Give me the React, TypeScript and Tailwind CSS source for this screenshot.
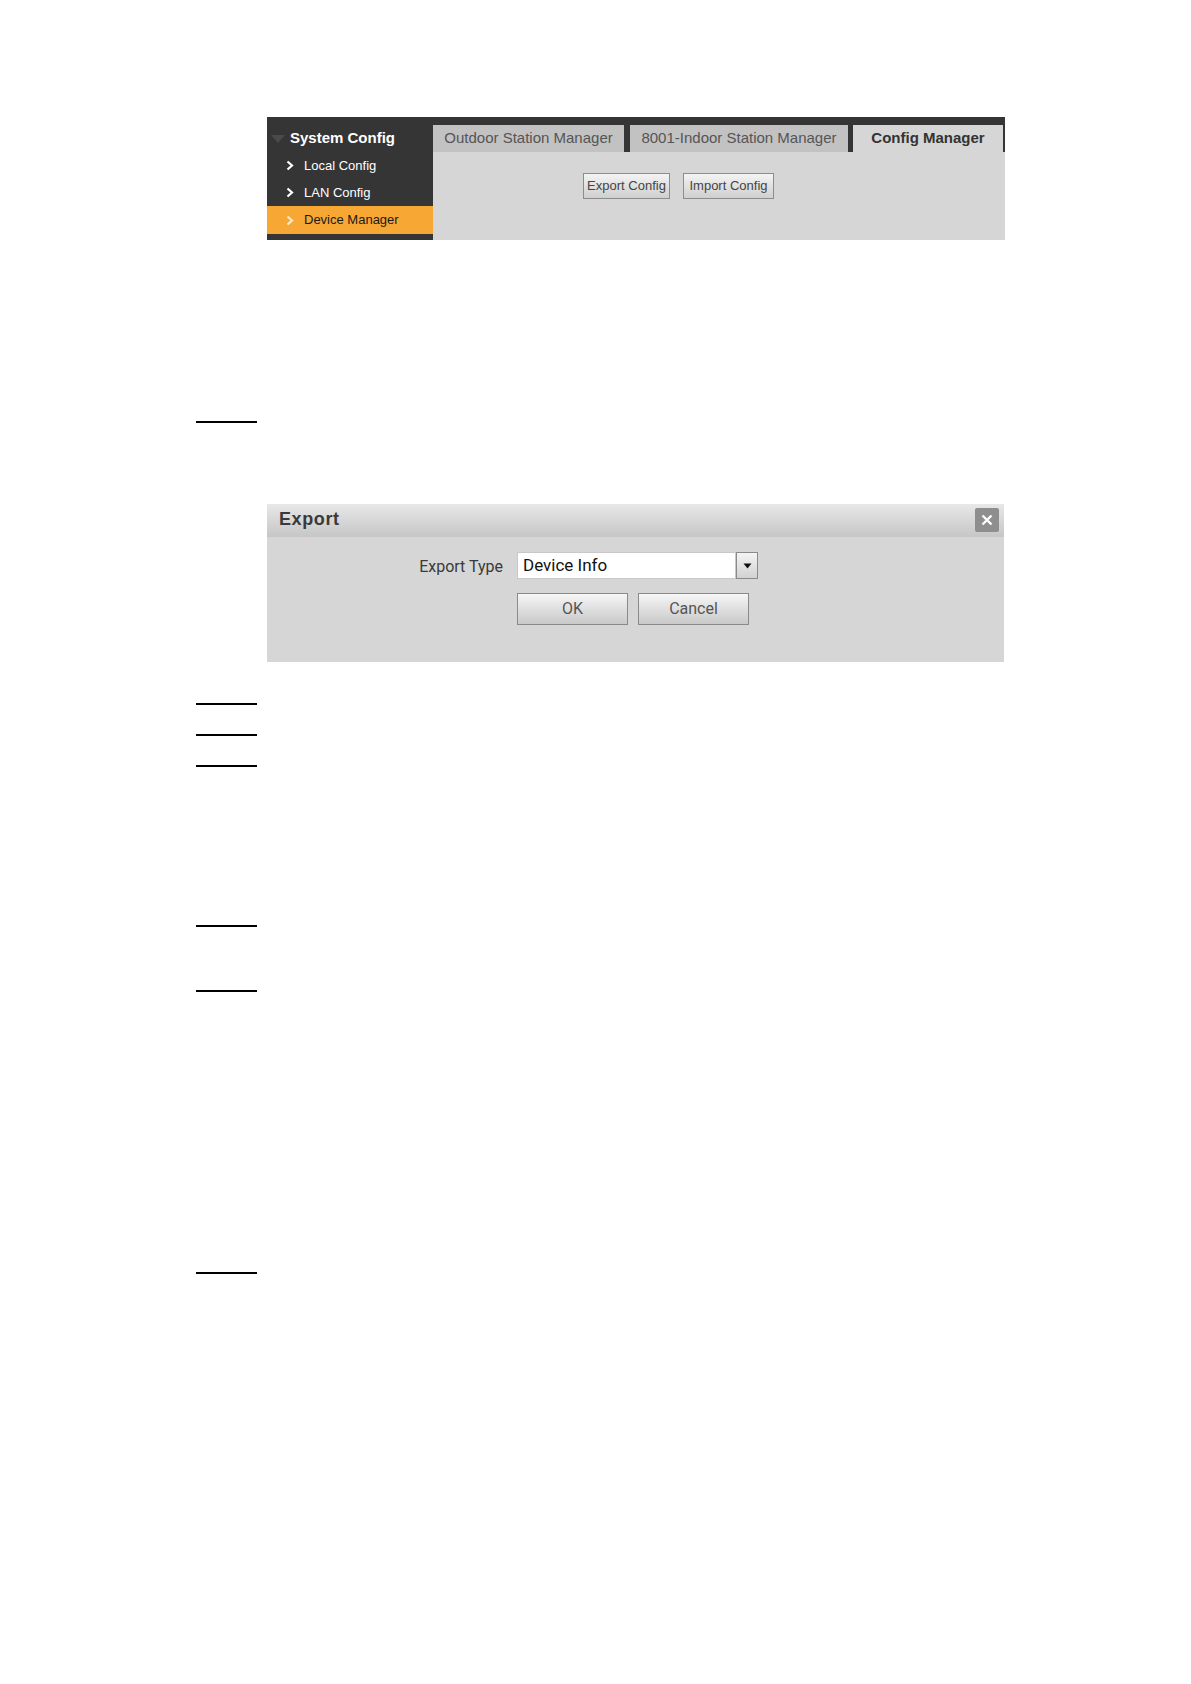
function Chevron({ className }: { className?: string }) {
  return (
    <svg width="8" height="11" viewBox="0 0 8 11" className={className}>
      <path d="M1.5 1.5 L6 5.5 L1.5 9.5" fill="none" stroke="currentColor" strokeWidth="2.2" />
    </svg>
  );
}

function SideItem({ label, active }: { label: string; active?: boolean }) {
  return (
    <div
      className={
        active
          ? "flex h-[28px] items-center gap-[10px] bg-[#f7a733] pl-[19px] text-[#1a1a1a]"
          : "flex h-[27px] items-center gap-[10px] pl-[19px] text-white"
      }
    >
      <Chevron className={active ? "text-[#fde9c4]" : "text-white"} />
      <span className="text-[13px]">{label}</span>
    </div>
  );
}

function Rule({ className }: { className: string }) {
  return <div className={`ml-[196px] h-[2px] w-[61px] bg-black ${className}`} />;
}

function ConfigPanel() {
  return (
    <div className="ml-[267px] mt-[117px] flex h-[123px] w-[738px] font-['Liberation_Sans',Arial,sans-serif]">
      <div className="flex w-[166px] flex-col bg-[#353535] pt-[8px]">
        <div className="flex h-[27px] items-center gap-[4px] pl-[3px]">
          <svg width="16" height="10" viewBox="0 0 16 10">
            <path d="M1 1 L15 1 L8 9 Z" fill="#4a4a4a" />
          </svg>
          <span className="text-[15px] font-bold text-white">System Config</span>
        </div>
        <SideItem label="Local Config" />
        <SideItem label="LAN Config" />
        <SideItem label="Device Manager" active />
      </div>
      <div className="flex flex-1 flex-col">
        <div className="flex h-[35px] items-end gap-[6px] bg-[#353535] pr-[2px]">
          <div className="flex h-[27px] w-[191px] items-center justify-center bg-[#c2c2c2] text-[15px] text-[#555]">
            Outdoor Station Manager
          </div>
          <div className="flex h-[27px] w-[218px] items-center justify-center bg-[#c2c2c2] text-[15px] text-[#555]">
            8001-Indoor Station Manager
          </div>
          <div className="-ml-[1px] flex h-[27px] flex-1 items-center justify-center bg-[#d6d6d6] text-[15px] font-bold text-[#333]">
            Config Manager
          </div>
        </div>
        <div className="flex flex-1 items-start gap-[13px] bg-[#d6d6d6] pl-[150px] pt-[21px]">
          <button className="h-[26px] w-[87px] border border-[#8c8c8c] bg-gradient-to-b from-[#f4f4f4] to-[#cfcfcf] text-[13px] text-[#444]">
            Export Config
          </button>
          <button className="h-[26px] w-[91px] border border-[#8c8c8c] bg-gradient-to-b from-[#f4f4f4] to-[#cfcfcf] text-[13px] text-[#444]">
            Import Config
          </button>
        </div>
      </div>
    </div>
  );
}

function ExportDialog() {
  return (
    <div className="ml-[267px] mt-[81px] h-[158px] w-[737px] bg-[#d6d6d6] font-['Roboto','Liberation_Sans',Arial,sans-serif]">
      <div className="flex h-[33px] items-center justify-between bg-gradient-to-b from-[#e8e8e8] to-[#c6c6c6] pb-[2px] pl-[12px] pr-[5px]">
        <span className="font-['Liberation_Sans',Arial,sans-serif] text-[18px] font-bold tracking-[0.6px] text-[#3a3a3a]">
          Export
        </span>
        <div className="flex h-[24px] w-[24px] items-center justify-center rounded-[2px] bg-[#8e8e8e]">
          <svg width="12" height="12" viewBox="0 0 12 12">
            <path d="M1.5 1.5 L10.5 10.5 M10.5 1.5 L1.5 10.5" stroke="white" strokeWidth="2.4" />
          </svg>
        </div>
      </div>
      <div className="flex pt-[15px]">
        <div className="w-[250px] pr-[14px] pt-[3px] text-right text-[16px] text-[#3a3a3a]">
          Export Type
        </div>
        <div className="flex flex-col gap-[14px]">
          <div className="flex h-[27px] w-[241px]">
            <div className="flex flex-1 items-center border border-[#c8c8c8] bg-white pl-[5px] text-[17px] text-[#111]">
              Device Info
            </div>
            <div className="flex w-[22px] items-center justify-center border border-[#8a8a8a] bg-gradient-to-b from-[#f4f4f4] to-[#d2d2d2]">
              <svg width="9" height="6" viewBox="0 0 9 6">
                <path d="M0.5 0.5 L8.5 0.5 L4.5 5.5 Z" fill="#111" />
              </svg>
            </div>
          </div>
          <div className="flex gap-[10px]">
            <button className="h-[32px] w-[111px] border border-[#8a8a8a] bg-gradient-to-b from-[#f6f6f6] to-[#c9c9c9] text-[16px] text-[#555]">
              OK
            </button>
            <button className="h-[32px] w-[111px] border border-[#8a8a8a] bg-gradient-to-b from-[#f6f6f6] to-[#c9c9c9] text-[16px] text-[#555]">
              Cancel
            </button>
          </div>
        </div>
      </div>
    </div>
  );
}

export default function App() {
  return (
    <div className="flex h-[1684px] w-[1191px] flex-col overflow-hidden bg-white">
      <ConfigPanel />
      <Rule className="mt-[181px]" />
      <ExportDialog />
      <Rule className="mt-[41px]" />
      <Rule className="mt-[29px]" />
      <Rule className="mt-[29px]" />
      <Rule className="mt-[158px]" />
      <Rule className="mt-[63px]" />
      <Rule className="mt-[280px]" />
    </div>
  );
}
